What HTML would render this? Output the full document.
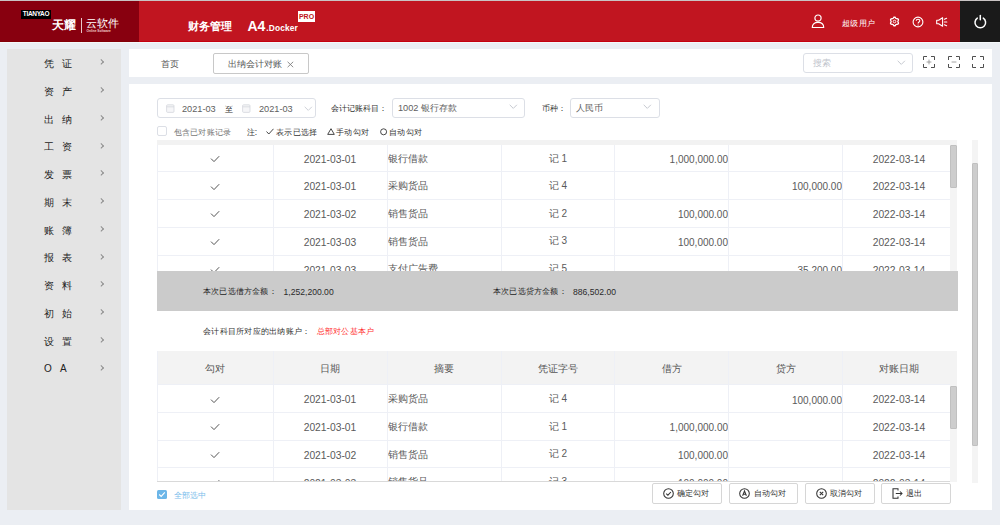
<!DOCTYPE html><html><head><meta charset="utf-8"><style>
*{margin:0;padding:0;box-sizing:border-box}
html,body{width:1000px;height:525px;overflow:hidden;background:#EBEEF3;font-family:"Liberation Sans",sans-serif;color:#333}
div,span,i,svg{position:absolute}
.t{white-space:nowrap;line-height:1}
.c{text-align:center}
.r{text-align:right}
</style></head><body>
<div style="left:0px;top:0px;width:1000px;height:42px;background:#C11520"></div>
<div style="left:0px;top:0px;width:139px;height:42px;background:#88000F"></div>
<div style="left:960px;top:0px;width:40px;height:42px;background:#1A1A1A"></div>
<div style="left:0px;top:0px;width:1000px;height:1px;background:#C9C3C3"></div>
<div style="left:139px;top:41px;width:821px;height:1px;background:#C5000F"></div>
<div style="left:0px;top:41px;width:139px;height:1px;background:#840008"></div>
<div style="left:0px;top:42px;width:1000px;height:1px;background:#F4F8FA"></div>
<div style="left:21px;top:10px;width:30px;height:9px;background:#000"></div>
<span class="t c" style="left:21.0px;top:11.25px;width:30px;height:6.5px;line-height:6.5px;font-size:6.5px;color:#fff;font-weight:bold;letter-spacing:-0.3px">TIANYAO</span>
<span class="t" style="left:52px;top:18.5px;height:12px;line-height:12px;font-size:12px;color:#fff;font-weight:bold">天耀</span>
<div style="left:81px;top:18px;width:1px;height:15px;background:#E8C8C8"></div>
<span class="t" style="left:86px;top:18.25px;height:10.5px;line-height:10.5px;font-size:10.5px;color:#fff;">云软件</span>
<span class="t" style="left:86.5px;top:29.599999999999998px;height:3.2px;line-height:3.2px;font-size:3.2px;color:#F0D0D0;font-weight:bold">Online Software</span>
<span class="t" style="left:187.5px;top:21.3px;height:11px;line-height:11px;font-size:11px;color:#fff;font-weight:bold">财务管理</span>
<span class="t" style="left:247.5px;top:19.0px;height:14px;line-height:14px;font-size:14px;color:#fff;font-weight:bold">A4</span>
<span class="t" style="left:266.3px;top:24.0px;height:8.4px;line-height:8.4px;font-size:8.4px;color:#fff;font-weight:bold;letter-spacing:.12px">.Docker</span>
<div style="left:298px;top:11px;width:17px;height:11px;background:#fff"></div>
<span class="t c" style="left:298.0px;top:13.0px;width:17px;height:7px;line-height:7px;font-size:7px;color:#C11520;font-weight:bold">PRO</span>
<svg style="left:811px;top:14px" width="14" height="15" viewBox="0 0 14 15"><circle cx="7" cy="4.1" r="3.1" fill="none" stroke="#fff" stroke-width="1.2"/><path d="M1.3 13.5 C1.3 10.2 3.6 8.4 7 8.4 C10.4 8.4 12.7 10.2 12.7 13.5 Z" fill="none" stroke="#fff" stroke-width="1.2" stroke-linejoin="round"/></svg>
<span class="t" style="left:842px;top:18.8px;height:8.4px;line-height:8.4px;font-size:8.4px;color:#fff;letter-spacing:.3px">超级用户</span>
<svg style="left:888.8px;top:16.4px" width="11" height="11" viewBox="0 0 11 11"><path d="M5.50 1.05 L5.88 1.14 L6.22 1.39 L6.51 1.73 L6.74 2.09 L6.95 2.40 L7.17 2.60 L7.46 2.70 L7.83 2.72 L8.26 2.74 L8.70 2.82 L9.08 2.99 L9.35 3.27 L9.47 3.65 L9.42 4.07 L9.27 4.49 L9.07 4.87 L8.91 5.20 L8.85 5.50 L8.91 5.80 L9.07 6.13 L9.27 6.51 L9.42 6.93 L9.47 7.35 L9.35 7.72 L9.08 8.01 L8.70 8.18 L8.26 8.26 L7.83 8.28 L7.46 8.30 L7.18 8.40 L6.95 8.60 L6.74 8.91 L6.51 9.27 L6.22 9.61 L5.88 9.86 L5.50 9.95 L5.12 9.86 L4.78 9.61 L4.49 9.27 L4.26 8.91 L4.05 8.60 L3.82 8.40 L3.54 8.30 L3.17 8.28 L2.74 8.26 L2.30 8.18 L1.92 8.01 L1.65 7.73 L1.53 7.35 L1.58 6.93 L1.73 6.51 L1.93 6.13 L2.09 5.80 L2.15 5.50 L2.09 5.20 L1.93 4.87 L1.73 4.49 L1.58 4.07 L1.53 3.65 L1.65 3.28 L1.92 2.99 L2.30 2.82 L2.74 2.74 L3.17 2.72 L3.54 2.70 L3.83 2.60 L4.05 2.40 L4.26 2.09 L4.49 1.73 L4.78 1.39 L5.12 1.14 L5.50 1.05Z" fill="none" stroke="#fff" stroke-width="1.3" stroke-linejoin="round"/><circle cx="5.5" cy="5.5" r="1.3" fill="none" stroke="#fff" stroke-width="0.9"/></svg>
<svg style="left:912px;top:15.8px" width="12" height="12" viewBox="0 0 12 12"><circle cx="6" cy="6" r="4.9" fill="none" stroke="#fff" stroke-width="1.1"/><path d="M4.2 4.7 C4.2 2.7 7.8 2.7 7.8 4.7 C7.8 5.9 6.1 6.1 6.1 7.5" fill="none" stroke="#fff" stroke-width="1.1"/><circle cx="6.1" cy="9" r="0.6" fill="#fff"/></svg>
<svg style="left:936px;top:17px" width="12" height="10" viewBox="0 0 12 10"><path d="M0.7 3.2 L2.6 3.2 L6.6 0.7 L6.6 9.3 L2.6 6.8 L0.7 6.8 Z" fill="none" stroke="#fff" stroke-width="1.1" stroke-linejoin="round"/><path d="M8.4 2.2 L10.6 1.2 M8.4 5 L10.8 5 M8.4 7.8 L10.6 8.8" stroke="#fff" stroke-width="1.1" stroke-linecap="round"/></svg>
<svg style="left:973px;top:14px" width="15" height="15" viewBox="0 0 15 15"><path d="M4.3 4.1 A5.3 5.3 0 1 0 10.3 4.1" fill="none" stroke="#fff" stroke-width="1.5" stroke-linecap="round"/><path d="M7.3 1.6 L7.3 5.8" stroke="#fff" stroke-width="1.5" stroke-linecap="round"/></svg>
<div style="left:7px;top:49px;width:114px;height:461px;background:#E4E4E4"></div>
<span class="t" style="left:43.5px;top:59.2px;height:10px;line-height:10px;font-size:10px;color:#222;letter-spacing:8px">凭证</span>
<div style="left:98.8px;top:60.300000000000004px;width:4.4px;height:4.4px;border-right:1px solid #8C8C8C;border-top:1px solid #8C8C8C;transform:rotate(45deg)"></div>
<span class="t" style="left:43.5px;top:86.95px;height:10px;line-height:10px;font-size:10px;color:#222;letter-spacing:8px">资产</span>
<div style="left:98.8px;top:88.05px;width:4.4px;height:4.4px;border-right:1px solid #8C8C8C;border-top:1px solid #8C8C8C;transform:rotate(45deg)"></div>
<span class="t" style="left:43.5px;top:114.7px;height:10px;line-height:10px;font-size:10px;color:#222;letter-spacing:8px">出纳</span>
<div style="left:98.8px;top:115.8px;width:4.4px;height:4.4px;border-right:1px solid #8C8C8C;border-top:1px solid #8C8C8C;transform:rotate(45deg)"></div>
<span class="t" style="left:43.5px;top:142.45px;height:10px;line-height:10px;font-size:10px;color:#222;letter-spacing:8px">工资</span>
<div style="left:98.8px;top:143.54999999999998px;width:4.4px;height:4.4px;border-right:1px solid #8C8C8C;border-top:1px solid #8C8C8C;transform:rotate(45deg)"></div>
<span class="t" style="left:43.5px;top:170.2px;height:10px;line-height:10px;font-size:10px;color:#222;letter-spacing:8px">发票</span>
<div style="left:98.8px;top:171.29999999999998px;width:4.4px;height:4.4px;border-right:1px solid #8C8C8C;border-top:1px solid #8C8C8C;transform:rotate(45deg)"></div>
<span class="t" style="left:43.5px;top:197.95px;height:10px;line-height:10px;font-size:10px;color:#222;letter-spacing:8px">期末</span>
<div style="left:98.8px;top:199.04999999999998px;width:4.4px;height:4.4px;border-right:1px solid #8C8C8C;border-top:1px solid #8C8C8C;transform:rotate(45deg)"></div>
<span class="t" style="left:43.5px;top:225.7px;height:10px;line-height:10px;font-size:10px;color:#222;letter-spacing:8px">账簿</span>
<div style="left:98.8px;top:226.79999999999998px;width:4.4px;height:4.4px;border-right:1px solid #8C8C8C;border-top:1px solid #8C8C8C;transform:rotate(45deg)"></div>
<span class="t" style="left:43.5px;top:253.45px;height:10px;line-height:10px;font-size:10px;color:#222;letter-spacing:8px">报表</span>
<div style="left:98.8px;top:254.54999999999998px;width:4.4px;height:4.4px;border-right:1px solid #8C8C8C;border-top:1px solid #8C8C8C;transform:rotate(45deg)"></div>
<span class="t" style="left:43.5px;top:281.2px;height:10px;line-height:10px;font-size:10px;color:#222;letter-spacing:8px">资料</span>
<div style="left:98.8px;top:282.3px;width:4.4px;height:4.4px;border-right:1px solid #8C8C8C;border-top:1px solid #8C8C8C;transform:rotate(45deg)"></div>
<span class="t" style="left:43.5px;top:308.95px;height:10px;line-height:10px;font-size:10px;color:#222;letter-spacing:8px">初始</span>
<div style="left:98.8px;top:310.05px;width:4.4px;height:4.4px;border-right:1px solid #8C8C8C;border-top:1px solid #8C8C8C;transform:rotate(45deg)"></div>
<span class="t" style="left:43.5px;top:336.7px;height:10px;line-height:10px;font-size:10px;color:#222;letter-spacing:8px">设置</span>
<div style="left:98.8px;top:337.8px;width:4.4px;height:4.4px;border-right:1px solid #8C8C8C;border-top:1px solid #8C8C8C;transform:rotate(45deg)"></div>
<span class="t" style="left:44px;top:364.45px;height:10px;line-height:10px;font-size:10px;color:#222;letter-spacing:0px">O&nbsp;&nbsp;&nbsp;A</span>
<div style="left:98.8px;top:365.55px;width:4.4px;height:4.4px;border-right:1px solid #8C8C8C;border-top:1px solid #8C8C8C;transform:rotate(45deg)"></div>
<div style="left:129px;top:49px;width:863px;height:28px;background:#fff"></div>
<span class="t" style="left:160.5px;top:59.8px;height:9px;line-height:9px;font-size:9px;color:#555;">首页</span>
<div style="left:213px;top:53px;width:96px;height:21px;border:1px solid #C8C8C8;border-radius:2px;background:#fff"></div>
<span class="t" style="left:227.5px;top:59.7px;height:9px;line-height:9px;font-size:9px;color:#555;">出纳会计对账</span>
<svg style="left:287px;top:61px" width="7" height="7" viewBox="0 0 7 7"><path d="M0.6 0.8 L6.2 6.2 M6.2 0.8 L0.6 6.2" stroke="#7A7A7A" stroke-width="0.85"/></svg>
<div style="left:803px;top:53px;width:110px;height:20px;border:1px solid #DCDFE6;border-radius:3px;background:#fff"></div>
<span class="t" style="left:813px;top:59.0px;height:9px;line-height:9px;font-size:9px;color:#C0C4CC;">搜索</span>
<svg style="left:896.8px;top:60.4px" width="9" height="6" viewBox="0 0 9 6"><path d="M0.7 0.8 L4.3 4.4 L7.9 0.8" fill="none" stroke="#BFC3CB" stroke-width="0.9"/></svg>
<svg style="left:923px;top:56px" width="12" height="12" viewBox="0 0 12 12"><path d="M0.5 4 L0.5 0.5 L4 0.5 M8 0.5 L11.5 0.5 L11.5 4 M11.5 8 L11.5 11.5 L8 11.5 M4 11.5 L0.5 11.5 L0.5 8" fill="none" stroke="#505050" stroke-width="1"/><path d="M3.6 6 L8.4 6 M6 3.6 L6 8.4" stroke="#8A8A8A" stroke-width="0.8"/></svg>
<svg style="left:948px;top:56px" width="12" height="12" viewBox="0 0 12 12"><path d="M0.5 4 L0.5 0.5 L4 0.5 M8 0.5 L11.5 0.5 L11.5 4 M11.5 8 L11.5 11.5 L8 11.5 M4 11.5 L0.5 11.5 L0.5 8" fill="none" stroke="#505050" stroke-width="1"/><path d="M3.6 6 L8.4 6" stroke="#8A8A8A" stroke-width="0.8"/></svg>
<svg style="left:972px;top:56px" width="12" height="12" viewBox="0 0 12 12"><path d="M0.5 4 L0.5 0.5 L4 0.5 M8 0.5 L11.5 0.5 L11.5 4 M11.5 8 L11.5 11.5 L8 11.5 M4 11.5 L0.5 11.5 L0.5 8" fill="none" stroke="#505050" stroke-width="1"/></svg>
<div style="left:129px;top:84px;width:863px;height:426px;background:#fff"></div>
<div style="left:157px;top:98px;width:159px;height:20px;border:1px solid #DCDFE6;border-radius:3px;background:#fff"></div>
<svg style="left:165.5px;top:104.3px" width="9" height="9" viewBox="0 0 9 9"><rect x="0.6" y="0.8" width="7.4" height="7.6" rx="1" fill="#F6F6F8" stroke="#D4D7DD" stroke-width="0.8"/><path d="M0.6 2.8 L8 2.8" stroke="#D4D7DD" stroke-width="0.8"/></svg>
<span class="t" style="left:182px;top:104.60000000000001px;height:9.2px;line-height:9.2px;font-size:9.2px;color:#606060;">2021-03</span>
<span class="t" style="left:224.5px;top:105.0px;height:8.4px;line-height:8.4px;font-size:8.4px;color:#333;">至</span>
<svg style="left:242px;top:104.3px" width="9" height="9" viewBox="0 0 9 9"><rect x="0.6" y="0.8" width="7.4" height="7.6" rx="1" fill="#F6F6F8" stroke="#D4D7DD" stroke-width="0.8"/><path d="M0.6 2.8 L8 2.8" stroke="#D4D7DD" stroke-width="0.8"/></svg>
<span class="t" style="left:259px;top:104.60000000000001px;height:9.2px;line-height:9.2px;font-size:9.2px;color:#606060;">2021-03</span>
<svg style="left:303.6px;top:105.6px" width="9" height="6" viewBox="0 0 9 6"><path d="M0.7 0.8 L4.3 4.4 L7.9 0.8" fill="none" stroke="#C8CCD4" stroke-width="0.9"/></svg>
<span class="t" style="left:331px;top:103.8px;height:8.4px;line-height:8.4px;font-size:8.4px;color:#333;">会计记账科目：</span>
<div style="left:391.5px;top:98px;width:133px;height:20px;border:1px solid #DCDFE6;border-radius:3px;background:#fff"></div>
<span class="t" style="left:398px;top:104.2px;height:9.2px;line-height:9.2px;font-size:9.2px;color:#606060;">1002 银行存款</span>
<svg style="left:509.4px;top:103.6px" width="9" height="6" viewBox="0 0 9 6"><path d="M0.7 0.8 L4.3 4.4 L7.9 0.8" fill="none" stroke="#BFC3CB" stroke-width="0.9"/></svg>
<span class="t" style="left:542px;top:103.8px;height:8.4px;line-height:8.4px;font-size:8.4px;color:#333;">币种：</span>
<div style="left:569.5px;top:98px;width:90px;height:20px;border:1px solid #DCDFE6;border-radius:3px;background:#fff"></div>
<span class="t" style="left:575.5px;top:104.2px;height:9.2px;line-height:9.2px;font-size:9.2px;color:#606060;">人民币</span>
<svg style="left:643.4px;top:103.6px" width="9" height="6" viewBox="0 0 9 6"><path d="M0.7 0.8 L4.3 4.4 L7.9 0.8" fill="none" stroke="#BFC3CB" stroke-width="0.9"/></svg>
<div style="left:157px;top:126px;width:10px;height:10px;border:1px solid #DCDFE6;border-radius:2px;background:#fff"></div>
<span class="t" style="left:173.5px;top:128.3px;height:8.4px;line-height:8.4px;font-size:8.4px;color:#777;letter-spacing:.3px">包含已对账记录</span>
<span class="t" style="left:246.5px;top:128.3px;height:8.4px;line-height:8.4px;font-size:8.4px;color:#333;letter-spacing:.3px">注:</span>
<svg style="left:265.5px;top:128px" width="8" height="7" viewBox="0 0 8 7"><path d="M0.5 3.5 L2.8 6 L7.5 0.8" fill="none" stroke="#333" stroke-width="0.9"/></svg>
<span class="t" style="left:276px;top:128.3px;height:8.4px;line-height:8.4px;font-size:8.4px;color:#333;letter-spacing:.3px">表示已选择</span>
<svg style="left:326.5px;top:128px" width="8" height="7" viewBox="0 0 8 7"><path d="M4 0.7 L7.3 6.4 L0.7 6.4 Z" fill="none" stroke="#333" stroke-width="0.9"/></svg>
<span class="t" style="left:336px;top:128.3px;height:8.4px;line-height:8.4px;font-size:8.4px;color:#333;letter-spacing:.3px">手动勾对</span>
<svg style="left:379.5px;top:128px" width="8" height="8" viewBox="0 0 8 8"><circle cx="3.6" cy="3.8" r="3" fill="none" stroke="#333" stroke-width="0.9"/></svg>
<span class="t" style="left:389px;top:128.3px;height:8.4px;line-height:8.4px;font-size:8.4px;color:#333;letter-spacing:.3px">自动勾对</span>
<div style="left:157px;top:140px;width:800px;height:131px;overflow:hidden;background:#fff">
<div style="left:0;top:31px;width:793px;height:1px;background:#EEF0F6"></div>
<div style="left:0;top:59px;width:793px;height:1px;background:#EEF0F6"></div>
<div style="left:0;top:87px;width:793px;height:1px;background:#EEF0F6"></div>
<div style="left:0;top:115px;width:793px;height:1px;background:#EEF0F6"></div>
<span class="t c" style="left:38.0px;top:15.3px;width:40px;height:8px;line-height:8px;font-size:8px;color:#555;"><svg width="10" height="8" viewBox="0 0 10 8" style="position:static;vertical-align:top"><path d="M1 3.6 L4 6.6 L9.2 1.2" fill="none" stroke="#555" stroke-width="1"/></svg></span>
<span class="t c" style="left:73.0px;top:15.049999999999999px;width:200px;height:10.3px;line-height:10.3px;font-size:10.3px;color:#5A5A5A;">2021-03-01</span>
<span class="t" style="left:231px;top:13.75px;height:9.5px;line-height:9.5px;font-size:9.5px;color:#5A5A5A;">银行借款</span>
<span class="t c" style="left:301.0px;top:13.5px;width:200px;height:10px;line-height:10px;font-size:10px;color:#5A5A5A;">记 1</span>
<span class="t r" style="left:371px;top:15.2px;width:200px;height:10px;line-height:10px;font-size:10px;color:#5A5A5A;">1,000,000.00</span>
<span class="t c" style="left:642.0px;top:15.049999999999999px;width:200px;height:10.3px;line-height:10.3px;font-size:10.3px;color:#5A5A5A;">2022-03-14</span>
<span class="t c" style="left:38.0px;top:42.55px;width:40px;height:8px;line-height:8px;font-size:8px;color:#555;"><svg width="10" height="8" viewBox="0 0 10 8" style="position:static;vertical-align:top"><path d="M1 3.6 L4 6.6 L9.2 1.2" fill="none" stroke="#555" stroke-width="1"/></svg></span>
<span class="t c" style="left:73.0px;top:42.300000000000004px;width:200px;height:10.3px;line-height:10.3px;font-size:10.3px;color:#5A5A5A;">2021-03-01</span>
<span class="t" style="left:231px;top:41.0px;height:9.5px;line-height:9.5px;font-size:9.5px;color:#5A5A5A;">采购货品</span>
<span class="t c" style="left:301.0px;top:40.75px;width:200px;height:10px;line-height:10px;font-size:10px;color:#5A5A5A;">记 4</span>
<span class="t r" style="left:485px;top:42.45px;width:200px;height:10px;line-height:10px;font-size:10px;color:#5A5A5A;">100,000.00</span>
<span class="t c" style="left:642.0px;top:42.300000000000004px;width:200px;height:10.3px;line-height:10.3px;font-size:10.3px;color:#5A5A5A;">2022-03-14</span>
<span class="t c" style="left:38.0px;top:70.3px;width:40px;height:8px;line-height:8px;font-size:8px;color:#555;"><svg width="10" height="8" viewBox="0 0 10 8" style="position:static;vertical-align:top"><path d="M1 3.6 L4 6.6 L9.2 1.2" fill="none" stroke="#555" stroke-width="1"/></svg></span>
<span class="t c" style="left:73.0px;top:70.05px;width:200px;height:10.3px;line-height:10.3px;font-size:10.3px;color:#5A5A5A;">2021-03-02</span>
<span class="t" style="left:231px;top:68.75px;height:9.5px;line-height:9.5px;font-size:9.5px;color:#5A5A5A;">销售货品</span>
<span class="t c" style="left:301.0px;top:68.5px;width:200px;height:10px;line-height:10px;font-size:10px;color:#5A5A5A;">记 2</span>
<span class="t r" style="left:371px;top:70.2px;width:200px;height:10px;line-height:10px;font-size:10px;color:#5A5A5A;">100,000.00</span>
<span class="t c" style="left:642.0px;top:70.05px;width:200px;height:10.3px;line-height:10.3px;font-size:10.3px;color:#5A5A5A;">2022-03-14</span>
<span class="t c" style="left:38.0px;top:98.10000000000001px;width:40px;height:8px;line-height:8px;font-size:8px;color:#555;"><svg width="10" height="8" viewBox="0 0 10 8" style="position:static;vertical-align:top"><path d="M1 3.6 L4 6.6 L9.2 1.2" fill="none" stroke="#555" stroke-width="1"/></svg></span>
<span class="t c" style="left:73.0px;top:97.85000000000001px;width:200px;height:10.3px;line-height:10.3px;font-size:10.3px;color:#5A5A5A;">2021-03-03</span>
<span class="t" style="left:231px;top:96.55000000000001px;height:9.5px;line-height:9.5px;font-size:9.5px;color:#5A5A5A;">销售货品</span>
<span class="t c" style="left:301.0px;top:96.30000000000001px;width:200px;height:10px;line-height:10px;font-size:10px;color:#5A5A5A;">记 3</span>
<span class="t r" style="left:371px;top:98.00000000000001px;width:200px;height:10px;line-height:10px;font-size:10px;color:#5A5A5A;">100,000.00</span>
<span class="t c" style="left:642.0px;top:97.85000000000001px;width:200px;height:10.3px;line-height:10.3px;font-size:10.3px;color:#5A5A5A;">2022-03-14</span>
<span class="t c" style="left:38.0px;top:125.75px;width:40px;height:8px;line-height:8px;font-size:8px;color:#555;"><svg width="10" height="8" viewBox="0 0 10 8" style="position:static;vertical-align:top"><path d="M1 3.6 L4 6.6 L9.2 1.2" fill="none" stroke="#555" stroke-width="1"/></svg></span>
<span class="t c" style="left:73.0px;top:125.49999999999997px;width:200px;height:10.3px;line-height:10.3px;font-size:10.3px;color:#5A5A5A;">2021-03-03</span>
<span class="t" style="left:231px;top:124.19999999999999px;height:9.5px;line-height:9.5px;font-size:9.5px;color:#5A5A5A;">支付广告费</span>
<span class="t c" style="left:301.0px;top:123.94999999999999px;width:200px;height:10px;line-height:10px;font-size:10px;color:#5A5A5A;">记 5</span>
<span class="t r" style="left:485px;top:125.64999999999998px;width:200px;height:10px;line-height:10px;font-size:10px;color:#5A5A5A;">35,200.00</span>
<span class="t c" style="left:642.0px;top:125.49999999999997px;width:200px;height:10.3px;line-height:10.3px;font-size:10.3px;color:#5A5A5A;">2022-03-14</span>
<div style="left:116px;top:0;width:1px;height:131px;background:#EEF0F6"></div>
<div style="left:230px;top:0;width:1px;height:131px;background:#EEF0F6"></div>
<div style="left:344px;top:0;width:1px;height:131px;background:#EEF0F6"></div>
<div style="left:457px;top:0;width:1px;height:131px;background:#EEF0F6"></div>
<div style="left:571px;top:0;width:1px;height:131px;background:#EEF0F6"></div>
<div style="left:685px;top:0;width:1px;height:131px;background:#EEF0F6"></div>
<div style="left:0;top:0;width:1px;height:131px;background:#EEF0F6"></div>
</div>
<div style="left:157px;top:140px;width:800px;height:4.5px;background:#F2F2F2"></div>
<div style="left:950px;top:140px;width:7px;height:131px;background:#F4F4F4"></div>
<div style="left:950px;top:144.5px;width:6.5px;height:43.5px;background:#CDCDCD;border:1px solid #C0C0C0;border-radius:1px"></div>
<div style="left:157px;top:271px;width:801px;height:40px;background:#CBCBCB"></div>
<span class="t" style="left:203px;top:287.7px;height:8.2px;line-height:8.2px;font-size:8.2px;color:#222;letter-spacing:.2px">本次已选借方金额：</span>
<span class="t" style="left:283.5px;top:287.9px;height:8.6px;line-height:8.6px;font-size:8.6px;color:#2A2A2A;">1,252,200.00</span>
<span class="t" style="left:493px;top:287.7px;height:8.2px;line-height:8.2px;font-size:8.2px;color:#222;letter-spacing:.2px">本次已选贷方金额：</span>
<span class="t" style="left:573px;top:287.9px;height:8.6px;line-height:8.6px;font-size:8.6px;color:#2A2A2A;">886,502.00</span>
<span class="t" style="left:203px;top:328.4px;height:8.2px;line-height:8.2px;font-size:8.2px;color:#333;letter-spacing:.25px">会计科目所对应的出纳账户：</span>
<span class="t" style="left:316.5px;top:328.4px;height:8.2px;line-height:8.2px;font-size:8.2px;color:#FF2D2D;letter-spacing:.25px">总部对公基本户</span>
<div style="left:157px;top:351px;width:800px;height:130px;overflow:hidden;background:#fff">
<div style="left:0;top:0px;width:800px;height:33.5px;background:#F3F3F3"></div>
<div style="left:0;top:33px;width:793px;height:1px;background:#EEF0F6"></div>
<div style="left:0;top:61px;width:793px;height:1px;background:#EEF0F6"></div>
<div style="left:0;top:89px;width:793px;height:1px;background:#EEF0F6"></div>
<div style="left:0;top:116px;width:793px;height:1px;background:#EEF0F6"></div>
<span class="t c" style="left:38.0px;top:44.65000000000002px;width:40px;height:8px;line-height:8px;font-size:8px;color:#555;"><svg width="10" height="8" viewBox="0 0 10 8" style="position:static;vertical-align:top"><path d="M1 3.6 L4 6.6 L9.2 1.2" fill="none" stroke="#555" stroke-width="1"/></svg></span>
<span class="t c" style="left:73.0px;top:44.40000000000003px;width:200px;height:10.3px;line-height:10.3px;font-size:10.3px;color:#5A5A5A;">2021-03-01</span>
<span class="t" style="left:231px;top:43.10000000000002px;height:9.5px;line-height:9.5px;font-size:9.5px;color:#5A5A5A;">采购货品</span>
<span class="t c" style="left:301.0px;top:42.85000000000002px;width:200px;height:10px;line-height:10px;font-size:10px;color:#5A5A5A;">记 4</span>
<span class="t r" style="left:485px;top:44.550000000000026px;width:200px;height:10px;line-height:10px;font-size:10px;color:#5A5A5A;">100,000.00</span>
<span class="t c" style="left:642.0px;top:44.40000000000003px;width:200px;height:10.3px;line-height:10.3px;font-size:10.3px;color:#5A5A5A;">2022-03-14</span>
<span class="t c" style="left:38.0px;top:72.40000000000002px;width:40px;height:8px;line-height:8px;font-size:8px;color:#555;"><svg width="10" height="8" viewBox="0 0 10 8" style="position:static;vertical-align:top"><path d="M1 3.6 L4 6.6 L9.2 1.2" fill="none" stroke="#555" stroke-width="1"/></svg></span>
<span class="t c" style="left:73.0px;top:72.15000000000002px;width:200px;height:10.3px;line-height:10.3px;font-size:10.3px;color:#5A5A5A;">2021-03-01</span>
<span class="t" style="left:231px;top:70.85000000000002px;height:9.5px;line-height:9.5px;font-size:9.5px;color:#5A5A5A;">银行借款</span>
<span class="t c" style="left:301.0px;top:70.60000000000002px;width:200px;height:10px;line-height:10px;font-size:10px;color:#5A5A5A;">记 1</span>
<span class="t r" style="left:371px;top:72.30000000000003px;width:200px;height:10px;line-height:10px;font-size:10px;color:#5A5A5A;">1,000,000.00</span>
<span class="t c" style="left:642.0px;top:72.15000000000002px;width:200px;height:10.3px;line-height:10.3px;font-size:10.3px;color:#5A5A5A;">2022-03-14</span>
<span class="t c" style="left:38.0px;top:100.10000000000001px;width:40px;height:8px;line-height:8px;font-size:8px;color:#555;"><svg width="10" height="8" viewBox="0 0 10 8" style="position:static;vertical-align:top"><path d="M1 3.6 L4 6.6 L9.2 1.2" fill="none" stroke="#555" stroke-width="1"/></svg></span>
<span class="t c" style="left:73.0px;top:99.85000000000001px;width:200px;height:10.3px;line-height:10.3px;font-size:10.3px;color:#5A5A5A;">2021-03-02</span>
<span class="t" style="left:231px;top:98.55000000000001px;height:9.5px;line-height:9.5px;font-size:9.5px;color:#5A5A5A;">销售货品</span>
<span class="t c" style="left:301.0px;top:98.30000000000001px;width:200px;height:10px;line-height:10px;font-size:10px;color:#5A5A5A;">记 2</span>
<span class="t r" style="left:371px;top:100.00000000000001px;width:200px;height:10px;line-height:10px;font-size:10px;color:#5A5A5A;">100,000.00</span>
<span class="t c" style="left:642.0px;top:99.85000000000001px;width:200px;height:10.3px;line-height:10.3px;font-size:10.3px;color:#5A5A5A;">2022-03-14</span>
<span class="t c" style="left:38.0px;top:127.75000000000006px;width:40px;height:8px;line-height:8px;font-size:8px;color:#555;"><svg width="10" height="8" viewBox="0 0 10 8" style="position:static;vertical-align:top"><path d="M1 3.6 L4 6.6 L9.2 1.2" fill="none" stroke="#555" stroke-width="1"/></svg></span>
<span class="t c" style="left:73.0px;top:127.50000000000003px;width:200px;height:10.3px;line-height:10.3px;font-size:10.3px;color:#5A5A5A;">2021-03-03</span>
<span class="t" style="left:231px;top:126.20000000000005px;height:9.5px;line-height:9.5px;font-size:9.5px;color:#5A5A5A;">销售货品</span>
<span class="t c" style="left:301.0px;top:125.95000000000005px;width:200px;height:10px;line-height:10px;font-size:10px;color:#5A5A5A;">记 3</span>
<span class="t r" style="left:371px;top:127.65000000000003px;width:200px;height:10px;line-height:10px;font-size:10px;color:#5A5A5A;">100,000.00</span>
<span class="t c" style="left:642.0px;top:127.50000000000003px;width:200px;height:10.3px;line-height:10.3px;font-size:10.3px;color:#5A5A5A;">2022-03-14</span>
<span class="t c" style="left:-42.0px;top:13.0px;width:200px;height:9.5px;line-height:9.5px;font-size:9.5px;color:#555;">勾对</span>
<span class="t c" style="left:73.0px;top:13.0px;width:200px;height:9.5px;line-height:9.5px;font-size:9.5px;color:#555;">日期</span>
<span class="t c" style="left:187.0px;top:13.0px;width:200px;height:9.5px;line-height:9.5px;font-size:9.5px;color:#555;">摘要</span>
<span class="t c" style="left:301.0px;top:13.0px;width:200px;height:9.5px;line-height:9.5px;font-size:9.5px;color:#555;">凭证字号</span>
<span class="t c" style="left:415.0px;top:13.0px;width:200px;height:9.5px;line-height:9.5px;font-size:9.5px;color:#555;">借方</span>
<span class="t c" style="left:528.5px;top:13.0px;width:200px;height:9.5px;line-height:9.5px;font-size:9.5px;color:#555;">贷方</span>
<span class="t c" style="left:642.0px;top:13.0px;width:200px;height:9.5px;line-height:9.5px;font-size:9.5px;color:#555;">对账日期</span>
<div style="left:116px;top:0;width:1px;height:130px;background:#EEF0F6"></div>
<div style="left:230px;top:0;width:1px;height:130px;background:#EEF0F6"></div>
<div style="left:344px;top:0;width:1px;height:130px;background:#EEF0F6"></div>
<div style="left:457px;top:0;width:1px;height:130px;background:#EEF0F6"></div>
<div style="left:571px;top:0;width:1px;height:130px;background:#EEF0F6"></div>
<div style="left:685px;top:0;width:1px;height:130px;background:#EEF0F6"></div>
<div style="left:0;top:0;width:1px;height:130px;background:#EEF0F6"></div>
</div>
<div style="left:157px;top:481px;width:800px;height:1px;background:#D9D9D9"></div>
<div style="left:950px;top:385px;width:7px;height:97px;background:#F4F4F4"></div>
<div style="left:950px;top:386px;width:6.5px;height:43px;background:#CDCDCD;border:1px solid #C0C0C0;border-radius:1px"></div>
<div style="left:971.5px;top:140px;width:6.5px;height:343px;background:#F4F4F4"></div>
<div style="left:971.5px;top:162.5px;width:6.5px;height:283.5px;background:#CDCDCD;border:1px solid #C0C0C0;border-radius:1px"></div>
<div style="left:157px;top:489.5px;width:9.5px;height:9.5px;background:#6CB6E8;border-radius:1.5px"></div>
<svg style="left:158px;top:491px" width="8" height="7" viewBox="0 0 8 7"><path d="M1.2 3.5 L3.2 5.4 L6.8 1.4" fill="none" stroke="#fff" stroke-width="1.1"/></svg>
<span class="t" style="left:173.5px;top:490.6px;height:8.4px;line-height:8.4px;font-size:8.4px;color:#7ABDEB;">全部选中</span>
<div style="left:652px;top:482.5px;width:69.5px;height:21px;border:1px solid #D6D6D6;border-radius:2px;background:#fff"></div>
<svg style="left:662.5px;top:487.5px" width="11" height="11" viewBox="0 0 11 11"><circle cx="5.5" cy="5.5" r="4.8" fill="none" stroke="#333" stroke-width="1.05"/><path d="M3.2 5.6 L4.9 7.2 L7.9 4" fill="none" stroke="#333" stroke-width="1.05"/></svg>
<span class="t" style="left:677px;top:489.3px;height:8.4px;line-height:8.4px;font-size:8.4px;color:#333;">确定勾对</span>
<div style="left:728.5px;top:482.5px;width:69.5px;height:21px;border:1px solid #D6D6D6;border-radius:2px;background:#fff"></div>
<svg style="left:739.0px;top:487.5px" width="11" height="11" viewBox="0 0 11 11"><circle cx="5.5" cy="5.5" r="4.8" fill="none" stroke="#333" stroke-width="1.05"/><path d="M3.6 7.8 L5.5 3 L7.4 7.8 M4.3 6.3 L6.7 6.3" fill="none" stroke="#333" stroke-width="1.05"/></svg>
<span class="t" style="left:753.5px;top:489.3px;height:8.4px;line-height:8.4px;font-size:8.4px;color:#333;">自动勾对</span>
<div style="left:805px;top:482.5px;width:69.5px;height:21px;border:1px solid #D6D6D6;border-radius:2px;background:#fff"></div>
<svg style="left:815.5px;top:487.5px" width="11" height="11" viewBox="0 0 11 11"><circle cx="5.5" cy="5.5" r="4.8" fill="none" stroke="#333" stroke-width="1.05"/><path d="M3.8 3.8 L7.2 7.2 M7.2 3.8 L3.8 7.2" fill="none" stroke="#333" stroke-width="1.05"/></svg>
<span class="t" style="left:830px;top:489.3px;height:8.4px;line-height:8.4px;font-size:8.4px;color:#333;">取消勾对</span>
<div style="left:881px;top:482.5px;width:69.5px;height:21px;border:1px solid #D6D6D6;border-radius:2px;background:#fff"></div>
<svg style="left:891.5px;top:487.5px" width="11" height="11" viewBox="0 0 11 11"><path d="M6 2.5 L6 0.8 L1 0.8 L1 10.2 L6 10.2 L6 8.5" fill="none" stroke="#333" stroke-width="1.05"/><path d="M3.8 5.5 L10 5.5 M8 3.5 L10 5.5 L8 7.5" fill="none" stroke="#333" stroke-width="1.05"/></svg>
<span class="t" style="left:906px;top:489.3px;height:8.4px;line-height:8.4px;font-size:8.4px;color:#333;">退出</span>
</body></html>
